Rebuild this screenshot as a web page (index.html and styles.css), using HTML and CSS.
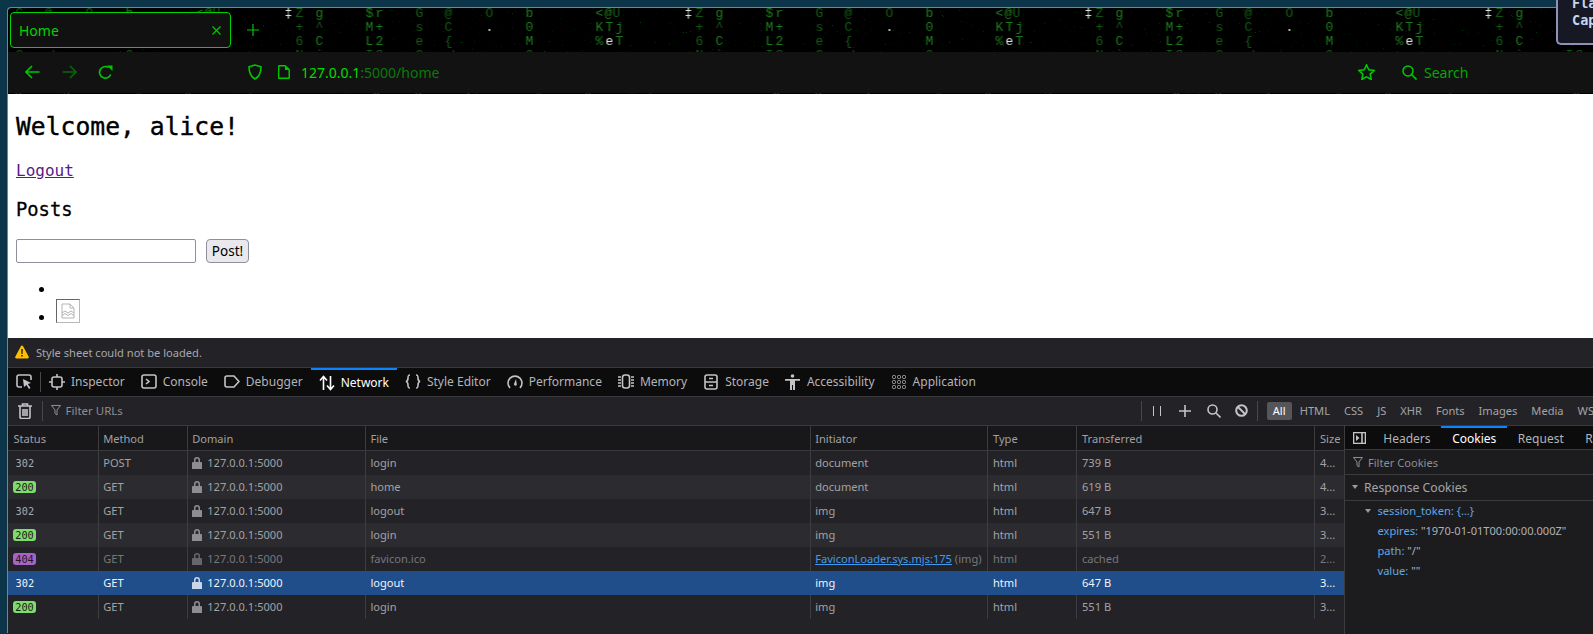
FILE: index.html
```html
<!DOCTYPE html>
<html>
<head>
<title>Home</title>
<link rel="stylesheet" href="styles.css">
</head>

<body>

<div class="tipCard">Fla<br>Cap</div>

<div class="browser">

<div class="chrome">
<svg class="matrix" width="1585" height="86">
<defs>
<filter id="specks" x="0" y="0" width="100%" height="100%">
<feTurbulence type="fractalNoise" baseFrequency="0.9" numOctaves="2" seed="4"/>
<feColorMatrix values="0 0 0 0 0  0 0 0 0 0.45  0 0 0 0 0  3 3 3 0 -5.8"/>
</filter>
<pattern id="rain" x="276.5" y="-1" width="400" height="120" patternUnits="userSpaceOnUse">
<g class="rainFaint">
<text x="11 131 160 201" y="10">ZG@O</text>
<text x="328" y="10">U</text>
<text x="11 131 160" y="24">+sC</text>
<text x="31" y="24">^</text>
<text x="11 131 160" y="38">6e{</text>
<text x="11 31 81 91 131 165 241" y="52">N`I82|O</text>
<text x="45 88 130 180 250 300 362" y="94">:O8{#&amp;|</text>
</g>
<g class="rainDim">
<text x="31 81 91 241 311" y="10">g$rb&lt;</text>
<text x="81 91 241 311 321 331" y="24">M+0KTj</text>
<text x="31 81 91 241 311 331" y="38">CL2M%T</text>
<text x="320" y="10">@</text>
</g>
<g class="rainWhite">
<text x="0" y="10">‡</text>
<text x="201" y="24">.</text>
<text x="321" y="38">e</text>
</g>
</pattern>
</defs>
<rect width="1585" height="86" fill="url(#rain)"/>
<rect width="1585" height="86" filter="url(#specks)" opacity="0.4"/>
</svg>

<div class="tabBar">
<div class="tab">
<span class="tabTitle">Home</span>
<svg class="tabClose" width="9" height="9" viewBox="0 0 9 9"><path d="M.5.5l8 8M8.5.5l-8 8"/></svg>
</div>
<svg class="newTab" width="12" height="12" viewBox="0 0 12 12"><path d="M6 0v12M0 6h12"/></svg>
</div>

<div class="navBar">
<svg class="navIcon" width="15" height="14" viewBox="0 0 15 14"><path d="M14.5 7H1M7 1 1 7l6 6"/></svg>
<svg class="navIcon navDim" width="15" height="14" viewBox="0 0 15 14"><path d="M.5 7H14M8 1l6 6-6 6"/></svg>
<svg class="navIcon" width="15" height="15" viewBox="0 0 15 15"><path d="M12.7 9.5A5.8 5.8 0 1 1 10.500 2.500"/><path class="solid" d="M9 .5h5.500V6z"/></svg>
<svg class="navIcon shield" width="14" height="16" viewBox="0 0 14 16"><path d="M7 1 1 2.800C1 8 2.500 12.500 7 15c4.500-2.500 6-7 6-12.200z"/></svg>
<svg class="navIcon pageIcon" width="12" height="14" viewBox="0 0 12 14"><path d="M1.500.7H7L11.300 5v7.300a1 1 0 0 1-1 1h-8.800a1 1 0 0 1-1-1V1.700a1 1 0 0 1 1-1z"/><path class="solid" d="M7 .7 11.300 5H7z"/></svg>
<div class="urlText"><b>127.0.0.1</b>:5000/home</div>
<svg class="navIcon star" width="17" height="16" viewBox="0 0 17 16"><path d="M8.500 1l2.300 4.800 5.200.7-3.800 3.600.9 5.200-4.600-2.500-4.600 2.500.9-5.200L1 6.500l5.200-.7z"/></svg>
<svg class="navIcon finder" width="15" height="15" viewBox="0 0 15 15"><circle cx="6" cy="6" r="5"/><path d="M9.500 9.500 14.500 14.500"/></svg>
<div class="searchText">Search</div>
</div>
</div>

<div class="pageBody">
<h1>Welcome, alice!</h1>
<a class="logoutLink" href="#">Logout</a>
<h2>Posts</h2>
<form class="postForm">
<input class="postInput" type="text">
<button class="postButton" type="button">Post!</button>
</form>
<ul class="postList">
<li></li>
<li><span class="brokenImg"><svg width="14" height="16" viewBox="0 0 14 16"><path d="M1 1h8l4 4v10H1zM9 1v4h4M1 10l3-2 3 2 3-2 3 2M1 12.500l3-2 3 2 3-2 3 2"/></svg></span></li>
</ul>
</div>

<div class="devtools">

<div class="noticeBar">
<svg width="14" height="14" viewBox="0 0 14 14"><path class="warnTri" d="M7 .5c.5 0 .9.3 1.100.7l5.600 10.600c.4.800-.1 1.700-1 1.700H1.300c-.9 0-1.400-.9-1-1.700L5.900 1.200C6.100.8 6.500.5 7 .5z"/><path class="warnMark" d="M6.200 4h1.600l-.2 5H6.400zM6.200 10h1.600v1.600H6.200z"/></svg>
Style sheet could not be loaded.
</div>

<div class="toolTabs">
<div class="pickBox">
<svg class="dtIcon" width="16" height="15" viewBox="0 0 16 15"><path d="M6 13H3a2 2 0 0 1-2-2V3a2 2 0 0 1 2-2h10a2 2 0 0 1 2 2v3"/><path class="solid" d="M7 5l8 4-3.200 1L14.500 14l-1.500 1-2.500-4L8 13z"/></svg>
</div>
<div class="toolTab"><svg class="dtIcon" width="16" height="16" viewBox="0 0 16 16"><rect x="3" y="3" width="10" height="10" rx="2"/><path d="M8 0v3M8 13v3M0 8h3M13 8h3"/></svg>Inspector</div>
<div class="toolTab"><svg class="dtIcon" width="16" height="15" viewBox="0 0 16 15"><rect x="1" y="1" width="14" height="13" rx="2"/><path d="M5 5l3 2.500L5 10"/></svg>Console</div>
<div class="toolTab"><svg class="dtIcon" width="16" height="13" viewBox="0 0 16 13"><path d="M3 1h7l5 5.500L10 12H3a2 2 0 0 1-2-2V3a2 2 0 0 1 2-2z"/></svg>Debugger</div>
<div class="toolTab toolActive"><svg class="dtIcon" width="16" height="16" viewBox="0 0 16 16"><path d="M4.500 15V2M1 5.500 4.500 1.500 8 5.500M11.500 1v13M8 10.500l3.500 4 3.500-4"/></svg>Network</div>
<div class="toolTab"><svg class="dtIcon" width="16" height="15" viewBox="0 0 16 15"><path d="M5 1C3 1 3 2 3 4s0 3-2 3.500C3 8 3 9 3 11s0 3 2 3M11 1c2 0 2 1 2 3s0 3 2 3.500C13 8 13 9 13 11s0 3-2 3"/></svg>Style Editor</div>
<div class="toolTab"><svg class="dtIcon" width="16" height="15" viewBox="0 0 16 15"><path d="M3 14A7 7 0 1 1 13 14"/><path class="solid" d="M7 10l2-5 .8 5.500a1.300 1.300 0 1 1-2.800-.5z"/></svg>Performance</div>
<div class="toolTab"><svg class="dtIcon" width="16" height="15" viewBox="0 0 16 15"><rect x="4.500" y="1" width="7" height="13" rx="2.500"/><path d="M0 3h3M0 6h3M0 9h3M0 12h3M13 3h3M13 6h3M13 9h3M13 12h3"/></svg>Memory</div>
<div class="toolTab"><svg class="dtIcon narrow" width="14" height="16" viewBox="0 0 14 16"><rect x="1" y="1" width="12" height="14" rx="2"/><path d="M1 8h12M5 4.500h4M5 11.500h4"/></svg>Storage</div>
<div class="toolTab"><svg class="dtIcon slim" width="15" height="16" viewBox="0 0 15 16"><circle class="solid" cx="7.500" cy="2" r="1.800"/><path class="solid" d="M0 5h15v1.800H10V16H8V11H7v5H5V6.800H0z"/></svg>Accessibility</div>
<div class="toolTab"><svg class="dtIcon thin narrow" width="14" height="14" viewBox="0 0 14 14"><rect x=".5" y=".5" width="3" height="3" rx="1"/><rect x="5.500" y=".5" width="3" height="3" rx="1"/><rect x="10.500" y=".5" width="3" height="3" rx="1"/><rect x=".5" y="5.500" width="3" height="3" rx="1"/><rect x="5.500" y="5.500" width="3" height="3" rx="1"/><rect x="10.500" y="5.500" width="3" height="3" rx="1"/><rect x=".5" y="10.500" width="3" height="3" rx="1"/><rect x="5.500" y="10.500" width="3" height="3" rx="1"/><rect x="10.500" y="10.500" width="3" height="3" rx="1"/></svg>Application</div>
</div>

<div class="filterBar">
<svg class="dtIcon trash" width="14" height="16" viewBox="0 0 14 16"><path d="M0 3h14M4.500 3V1h5v2M2 3v11a1.500 1.500 0 0 0 1.500 1.500h7A1.500 1.500 0 0 0 12 14V3M5 6v7M7 6v7M9 6v7"/></svg>
<span class="vSep sepFirst"></span>
<svg class="funnel" width="10" height="11" viewBox="0 0 10 11"><path d="M.5.500h9L6 5v5L4 8.500V5z"/></svg>
<span class="filterText">Filter URLs</span>
<span class="vSep sepRight"></span>
<svg class="dtIcon pause" width="8" height="10" viewBox="0 0 8 10"><path d="M.5 0v10M7.500 0v10"/></svg>
<svg class="dtIcon plus" width="12" height="12" viewBox="0 0 12 12"><path d="M6 0v12M0 6h12"/></svg>
<svg class="dtIcon mag" width="14" height="14" viewBox="0 0 14 14"><circle cx="5.500" cy="5.500" r="4.500"/><path d="M9 9l4.500 4.500"/></svg>
<svg class="dtIcon block" width="13" height="13" viewBox="0 0 13 13"><circle cx="6.500" cy="6.500" r="5.300"/><path d="M3 3l7 7"/></svg>
<span class="vSep sepTypes"></span>
<span class="typeAll">All</span>
<span class="typeBtn">HTML</span>
<span class="typeBtn">CSS</span>
<span class="typeBtn">JS</span>
<span class="typeBtn">XHR</span>
<span class="typeBtn">Fonts</span>
<span class="typeBtn">Images</span>
<span class="typeBtn">Media</span>
<span class="typeBtn">WS</span>
</div>

<div class="netArea">

<div class="netTable">
<div class="netRow netHead"><span>Status</span><span>Method</span><span>Domain</span><span>File</span><span>Initiator</span><span>Type</span><span>Transferred</span><span>Size</span></div>

<div class="netRow"><span class="code">302</span><span>POST</span><span class="domain"><svg class="lock" width="10" height="12" viewBox="0 0 10 12"><path d="M5 0a3 3 0 0 1 3 3v2h1a1 1 0 0 1 1 1v6H0V6a1 1 0 0 1 1-1h1V3a3 3 0 0 1 3-3zm0 1.500A1.500 1.500 0 0 0 3.500 3v2h3V3A1.500 1.500 0 0 0 5 1.500z"/></svg>127.0.0.1:5000</span><span>login</span><span>document</span><span>html</span><span>739 B</span><span>4...</span></div>

<div class="netRow"><span><i class="badge ok">200</i></span><span>GET</span><span class="domain"><svg class="lock" width="10" height="12" viewBox="0 0 10 12"><path d="M5 0a3 3 0 0 1 3 3v2h1a1 1 0 0 1 1 1v6H0V6a1 1 0 0 1 1-1h1V3a3 3 0 0 1 3-3zm0 1.500A1.500 1.500 0 0 0 3.500 3v2h3V3A1.500 1.500 0 0 0 5 1.500z"/></svg>127.0.0.1:5000</span><span>home</span><span>document</span><span>html</span><span>619 B</span><span>4...</span></div>

<div class="netRow"><span class="code">302</span><span>GET</span><span class="domain"><svg class="lock" width="10" height="12" viewBox="0 0 10 12"><path d="M5 0a3 3 0 0 1 3 3v2h1a1 1 0 0 1 1 1v6H0V6a1 1 0 0 1 1-1h1V3a3 3 0 0 1 3-3zm0 1.500A1.500 1.500 0 0 0 3.500 3v2h3V3A1.500 1.500 0 0 0 5 1.500z"/></svg>127.0.0.1:5000</span><span>logout</span><span>img</span><span>html</span><span>647 B</span><span>3...</span></div>

<div class="netRow"><span><i class="badge ok">200</i></span><span>GET</span><span class="domain"><svg class="lock" width="10" height="12" viewBox="0 0 10 12"><path d="M5 0a3 3 0 0 1 3 3v2h1a1 1 0 0 1 1 1v6H0V6a1 1 0 0 1 1-1h1V3a3 3 0 0 1 3-3zm0 1.500A1.500 1.500 0 0 0 3.500 3v2h3V3A1.500 1.500 0 0 0 5 1.500z"/></svg>127.0.0.1:5000</span><span>login</span><span>img</span><span>html</span><span>551 B</span><span>3...</span></div>

<div class="netRow rowCached"><span><i class="badge miss">404</i></span><span>GET</span><span class="domain"><svg class="lock" width="10" height="12" viewBox="0 0 10 12"><path d="M5 0a3 3 0 0 1 3 3v2h1a1 1 0 0 1 1 1v6H0V6a1 1 0 0 1 1-1h1V3a3 3 0 0 1 3-3zm0 1.500A1.500 1.500 0 0 0 3.500 3v2h3V3A1.500 1.500 0 0 0 5 1.500z"/></svg>127.0.0.1:5000</span><span>favicon.ico</span><span><a class="srcLink" href="#">FaviconLoader.sys.mjs:175</a> (img)</span><span>html</span><span>cached</span><span>2...</span></div>

<div class="netRow rowSelected"><span class="code">302</span><span>GET</span><span class="domain"><svg class="lock" width="10" height="12" viewBox="0 0 10 12"><path d="M5 0a3 3 0 0 1 3 3v2h1a1 1 0 0 1 1 1v6H0V6a1 1 0 0 1 1-1h1V3a3 3 0 0 1 3-3zm0 1.500A1.500 1.500 0 0 0 3.500 3v2h3V3A1.500 1.500 0 0 0 5 1.500z"/></svg>127.0.0.1:5000</span><span>logout</span><span>img</span><span>html</span><span>647 B</span><span>3...</span></div>

<div class="netRow"><span><i class="badge ok">200</i></span><span>GET</span><span class="domain"><svg class="lock" width="10" height="12" viewBox="0 0 10 12"><path d="M5 0a3 3 0 0 1 3 3v2h1a1 1 0 0 1 1 1v6H0V6a1 1 0 0 1 1-1h1V3a3 3 0 0 1 3-3zm0 1.500A1.500 1.500 0 0 0 3.500 3v2h3V3A1.500 1.500 0 0 0 5 1.500z"/></svg>127.0.0.1:5000</span><span>login</span><span>img</span><span>html</span><span>551 B</span><span>3...</span></div>
</div>

<div class="sidePanel">
<div class="sideTabs">
<svg class="dtIcon toggle" width="13" height="12" viewBox="0 0 13 12"><rect x=".5" y=".5" width="12" height="11"/><path d="M9 .5v11"/><path class="solid" d="M3 3l3.500 3L3 9z"/></svg>
<span class="sideTab">Headers</span>
<span class="sideTab sideActive">Cookies</span>
<span class="sideTab">Request</span>
<span class="sideTab">Response</span>
</div>
<div class="cookieFilter">
<svg class="funnel" width="10" height="11" viewBox="0 0 10 11"><path d="M.5.500h9L6 5v5L4 8.500V5z"/></svg>
Filter Cookies
</div>
<div class="cookieHead"><i class="twisty"></i>Response Cookies</div>
<div class="cookieTree">
<div class="treeLine treeRoot"><i class="twisty small"></i><span class="key">session_token:</span> <span class="key">{…}</span></div>
<div class="treeLine"><span class="key">expires:</span> "1970-01-01T00:00:00.000Z"</div>
<div class="treeLine"><span class="key">path:</span> "/"</div>
<div class="treeLine"><span class="key">value:</span> ""</div>
</div>
</div>

</div>
</div>
</div>

</body>
</html>
```

FILE: styles.css
```css
html, body {
    height: 100%;
}
body {
    margin: 0;
    background-color: #0c3549;
    overflow: hidden;
    font: 11.1px "Noto Sans", sans-serif;
}
svg {
    flex: none;
}

/* desktop tooltip that pokes in at the top right */
.tipCard {
    position: absolute;
    top: -8px;
    right: 0;
    width: 21px;
    height: 48px;
    padding: 1px 0 0 14px;
    background-color: #161824;
    border: 2px solid #8f92b8;
    border-right: 0;
    border-radius: 0 0 0 5px;
    color: #c9d4f0;
    font: bold 13.5px/17px "DejaVu Sans Mono", monospace;
    white-space: nowrap;
    overflow: hidden;
    z-index: 2;
}

.browser {
    height: 626px;
    margin: 8px 0 0 8px;
    display: flex;
    flex-direction: column;
    border-top-left-radius: 4px;
    box-shadow: -1px -1px 0 #6d8796;
}

/* browser chrome */
.chrome {
    position: relative;
    height: 85.5px;
    background-color: #000;
    flex: none;
    border-top-left-radius: 4px;
    overflow: hidden;
}
.matrix {
    position: absolute;
    top: 0;
    left: 0;
}
.matrix text {
    font: 13px "Liberation Mono", monospace;
}
.rainFaint text {
    fill: #125a12;
}
.rainDim text {
    fill: #1c7a1c;
}
.rainWhite text {
    fill: #d8e8d8;
}
.tabBar {
    position: relative;
    height: 44px;
    display: flex;
    align-items: center;
    padding-left: 2px;
}
.tab {
    width: 221px;
    height: 35.5px;
    box-sizing: border-box;
    display: flex;
    align-items: center;
    padding: 0 7.5px 0 8px;
    background-color: #111;
    border: 1px solid #00d400;
    border-radius: 4px;
    color: #00d400;
}
.tabTitle {
    flex: 1;
    font-size: 14px;
}
.tabClose path, .newTab path {
    fill: none;
    stroke: #00c800;
    stroke-width: 1.2;
}
.tabClose {
    margin-right: 2px;
}
.newTab {
    margin-left: 15.5px;
}
.navBar {
    position: relative;
    height: 40.5px;
    background-color: #121212;
    display: flex;
    align-items: center;
    padding-left: 17px;
}
.navIcon path, .navIcon circle {
    fill: none;
    stroke: #00c800;
    stroke-width: 1.6;
}
.navIcon path.solid {
    fill: #00c800;
    stroke: none;
}
.navIcon {
    margin-right: 21.5px;
}
.navDim {
    opacity: 0.45;
}
.shield {
    margin-left: 113px;
    margin-right: 16px;
}
.navBar .pageIcon {
    margin-right: 11.5px;
}
.urlText {
    font-size: 14px;
    color: #0a7a0a;
    flex: 1;
}
.urlText b {
    font-weight: normal;
    color: #00dc00;
}
.star {
    margin-right: 27px;
}
.finder {
    margin-right: 7.5px;
}
.searchText {
    width: 169px;
    font-size: 14px;
    color: #00a800;
}

/* the page itself */
.pageBody {
    height: 244.5px;
    flex: none;
    box-sizing: border-box;
    padding: 1px 0 0 8px;
    background-color: #fff;
    color: #000;
    font: 16px "DejaVu Sans Mono", monospace;
    overflow: hidden;
}
.pageBody h1 {
    margin: 17px 0 0 0;
    font-size: 24.7px;
    line-height: 30px;
    font-weight: normal;
    -webkit-text-stroke: 0.4px #000;
}
.logoutLink {
    display: block;
    width: max-content;
    margin-top: 19px;
    font-size: 16px;
    line-height: 20px;
    color: #551a8b;
}
.pageBody h2 {
    margin: 18px 0 0 0;
    font-size: 18.8px;
    line-height: 22px;
    font-weight: normal;
    -webkit-text-stroke: 0.3px #000;
}
.postForm {
    display: flex;
    gap: 10px;
    margin-top: 18px;
}
.postInput {
    width: 180px;
    height: 24px;
    box-sizing: border-box;
    margin: 0;
    border: 1px solid #8f8f9d;
    border-radius: 2px;
    background-color: #fff;
}
.postButton {
    width: 43px;
    height: 24px;
    box-sizing: border-box;
    padding: 0;
    margin: 0;
    font: 13.5px "Noto Sans", sans-serif;
    color: #000;
    background-color: #e9e9ed;
    border: 1px solid #8f8f9d;
    border-radius: 4px;
}
.postList {
    margin: 17px 0 0 0;
    padding-left: 40px;
}
.postList li {
    min-height: 19px;
}
.brokenImg {
    display: inline-block;
    width: 24px;
    height: 24px;
    box-sizing: border-box;
    padding: 3px 0 0 4px;
    border: 1px solid #b8b8b8;
    border-top-color: #666;
    border-left-color: #666;
    overflow: hidden;
}
.brokenImg svg {
    display: block;
}
.brokenImg path {
    fill: none;
    stroke: #b4b4b4;
}

/* devtools */
.devtools {
    flex: 1;
    min-height: 0;
    display: flex;
    flex-direction: column;
    background-color: #232327;
    color: #9d9da1;
}
.dtIcon path, .dtIcon rect, .dtIcon circle {
    fill: none;
    stroke: #c4c4c8;
    stroke-width: 1.6;
}
.dtIcon .solid, .dtIcon path.solid, .dtIcon circle.solid {
    fill: #c4c4c8;
    stroke: none;
}
.dtIcon.thin rect {
    stroke-width: 0.8;
}
.noticeBar {
    height: 29.5px;
    box-sizing: border-box;
    flex: none;
    display: flex;
    align-items: center;
    gap: 7px;
    padding-left: 7px;
    border-bottom: 1px solid #3a3a3e;
    color: #a8a8ac;
}
.warnTri {
    fill: #ffbf00;
}
.warnMark {
    fill: #232327;
}
.toolTabs {
    height: 29.5px;
    box-sizing: border-box;
    flex: none;
    display: flex;
    background-color: #0c0c0d;
    border-bottom: 1px solid #3a3a3e;
    font-size: 12px;
    color: #b4b4b8;
}
.pickBox {
    width: 33px;
    padding-left: 8px;
    box-sizing: border-box;
    display: flex;
    align-items: center;
    background: linear-gradient(#48484c, #48484c) right center / 1px 20px no-repeat;
}
.toolTab {
    display: flex;
    align-items: center;
    gap: 6px;
    padding: 0 8px;
    height: 28.5px;
    box-sizing: border-box;
}
.narrow {
    margin: 0 1px;
}
.slim {
    margin-right: 1px;
}
.toolActive {
    color: #fff;
    border-top: 2px solid #0a84ff;
}
.toolActive .dtIcon path {
    stroke: #fff;
}
.filterBar {
    height: 29px;
    box-sizing: border-box;
    flex: none;
    display: flex;
    align-items: center;
    padding-bottom: 1px;
    border-bottom: 1px solid #3a3a3e;
    color: #8e8e92;
}
.trash {
    margin-left: 10px;
}
.vSep {
    width: 1px;
    height: 20px;
    background-color: #48484c;
}
.sepFirst {
    margin: 0 8px 0 9.5px;
}
.funnel path {
    fill: none;
    stroke: #8e8e92;
}
.filterText {
    margin-left: 5px;
    flex: 1;
    font-size: 11.5px;
}
.sepRight {
    margin-right: 11px;
}
.pause {
    margin-right: 18px;
}
.pause path {
    stroke-width: 1;
}
.plus {
    margin-right: 16px;
}
.mag {
    margin-right: 14px;
}
.block {
    margin-right: 9px;
}
.block circle, .block path {
    stroke-width: 2;
}
.sepTypes {
    margin-right: 9px;
}
.typeAll {
    width: 25px;
    height: 18px;
    line-height: 18px;
    text-align: center;
    background-color: #55555a;
    border-radius: 2px;
    color: #fff;
    margin-right: 8px;
}
.typeBtn {
    margin-right: 14px;
    color: #a4a4a8;
    white-space: nowrap;
    flex: none;
}
.typeBtn:last-child {
    margin-right: -1px;
}

/* network table */
.netArea {
    flex: 1;
    min-height: 0;
    display: flex;
}
.netTable {
    width: 1335.5px;
    flex: none;
}
.netRow {
    display: grid;
    grid-template-columns: 89.7px 89px 178.2px 444.8px 177.8px 89px 238px 29px;
    height: 24px;
    line-height: 24px;
    color: #a2a2a6;
}
.netRow:nth-child(odd) {
    background-color: #2c2c30;
}
.netRow > span {
    padding-left: 4.5px;
    border-left: 1px solid #3d3d41;
    overflow: hidden;
    white-space: nowrap;
    box-sizing: border-box;
}
.netRow > span:first-child {
    border-left: 0;
    padding-left: 5px;
}
.netRow.netHead {
    height: 25px;
    line-height: 26px;
    background-color: #18181a;
    box-shadow: inset 0 -1px 0 #3a3a3e;
    color: #a0a0a4;
}
.netRow.netHead > span:first-child {
    padding-left: 5.5px;
}
.netRow > span.code {
    padding-left: 7.5px;
    font-family: "DejaVu Sans Mono", monospace;
    font-size: 10.3px;
    color: #a8a8ac;
}
.badge {
    display: inline-block;
    width: 23px;
    height: 12px;
    text-align: center;
    border-radius: 3px;
    font: 10.3px/12px "DejaVu Sans Mono", monospace;
    color: #1c1c1e;
    vertical-align: middle;
    position: relative;
    top: -1px;
}
.ok {
    background-color: #7fdc6a;
}
.miss {
    background-color: #a862c6;
}
.domain {
    display: flex;
    align-items: center;
    gap: 5px;
}
.lock {
    fill: #8e8e92;
}
.rowCached {
    color: #77777b;
}
.rowCached .lock {
    fill: #66666a;
}
.srcLink {
    color: #3f9bf0;
}
.netRow.rowSelected {
    background-color: #204e8a;
    color: #f0f4fa;
}
.netRow.rowSelected > span {
    border-left-color: #204e8a;
    color: #f0f4fa;
}
.rowSelected .lock {
    fill: #c9d6ea;
}

/* cookies side panel */
.sidePanel {
    flex: 1;
    min-width: 0;
    background-color: #1c1c1f;
    border-left: 1px solid #3d3d41;
    color: #b1b1b5;
    overflow: hidden;
}
.sideTabs {
    height: 24px;
    display: flex;
    align-items: center;
    box-sizing: border-box;
    padding-left: 8px;
    background-color: #0c0c0d;
    border-bottom: 1px solid #3a3a3e;
    font-size: 12px;
    color: #b4b4b8;
    white-space: nowrap;
}
.sideTab {
    padding: 0 10.8px;
    height: 100%;
    line-height: 25px;
    box-sizing: border-box;
    flex: none;
}
.sideActive {
    color: #fff;
    border-top: 2px solid #0a84ff;
    line-height: 21px;
}
.toggle {
    margin-right: 7px;
}
.cookieFilter {
    height: 25px;
    box-sizing: border-box;
    display: flex;
    align-items: center;
    gap: 5px;
    padding-left: 8.5px;
    border-bottom: 1px solid #3a3a3e;
    color: #8e8e92;
}
.cookieHead {
    height: 25.5px;
    box-sizing: border-box;
    display: flex;
    align-items: center;
    padding-left: 7.5px;
    border-bottom: 1px solid #3a3a3e;
    font-size: 12.2px;
    color: #a4a4a8;
}
.twisty {
    width: 0;
    height: 0;
    border-left: 3.5px solid transparent;
    border-right: 3.5px solid transparent;
    border-top: 4.5px solid #9a9a9e;
    margin-right: 6px;
}
.twisty.small {
    display: inline-block;
    position: absolute;
    margin: 8px 0 0 -13px;
}
.cookieTree {
    padding-left: 33px;
}
.treeLine {
    line-height: 20px;
    white-space: nowrap;
}
.key {
    color: #63a7e4;
}
```
